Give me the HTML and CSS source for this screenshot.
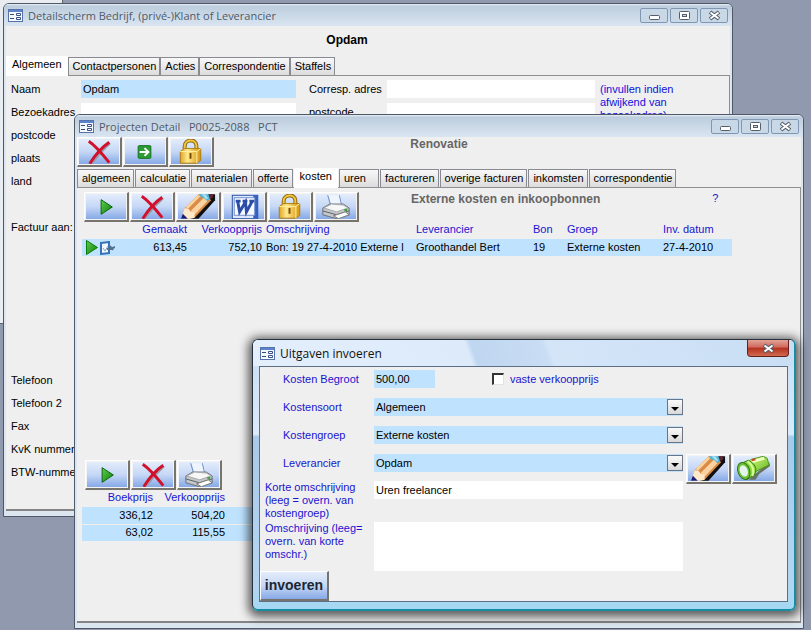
FILE: index.html
```
<!DOCTYPE html>
<html lang="nl">
<head>
  <meta charset="UTF-8">
  <meta name="viewport" content="width=device-width, initial-scale=1.0">
  <title>Projecten Detail</title>
  <link rel="stylesheet" href="styles.css">
</head>
<body>
  <!-- shared icons -->
  <svg class="defs" width="0" height="0" aria-hidden="true">
    <defs>
      <linearGradient id="gGreen" x1="0" y1="0" x2="1" y2="1">
        <stop offset="0" stop-color="#5fd04a"/><stop offset="1" stop-color="#0b7d0b"/>
      </linearGradient>
      <linearGradient id="gGold" x1="0" y1="0" x2="1" y2="0">
        <stop offset="0" stop-color="#e0a526"/><stop offset=".35" stop-color="#ffe98a"/><stop offset="1" stop-color="#d8940f"/>
      </linearGradient>
      <linearGradient id="gLime" x1="0" y1="0" x2="1" y2="1">
        <stop offset="0" stop-color="#d4ff80"/><stop offset="1" stop-color="#5fae1c"/>
      </linearGradient>
      <symbol id="form" viewBox="0 0 15 13">
        <rect x=".5" y=".5" width="14" height="12" fill="#f4f8ff" stroke="#5672a8"/>
        <rect x="1" y="1" width="13" height="2" fill="#5b83cf"/>
        <path d="M2 5.500h4M2 9.500h4" stroke="#3a4a70"/>
        <path d="M8.500 4.500h4v2h-4zM8.500 8.500h4v2h-4z" fill="#fff" stroke="#3a5288"/>
      </symbol>
      <symbol id="play" viewBox="0 0 41 25">
        <path d="M15.500 5.500L27 13 15.500 20.500z" fill="url(#gGreen)" stroke="#0a640a"/>
      </symbol>
      <symbol id="cross" viewBox="0 0 41 25">
        <path d="M13 25C18 18 24 11 32 4" stroke="#9a9aa8" stroke-width="2" fill="none"/>
        <path d="M10 2C16 6 24 15 31 24" stroke="#d2102c" stroke-width="3" fill="none"/>
        <path d="M11 25C16 17 22 9 31 3" stroke="#d2102c" stroke-width="3" fill="none"/>
      </symbol>
      <symbol id="go" viewBox="0 0 41 25">
        <rect x="13.500" y="6.500" width="13" height="13" rx="1" fill="#2c9a35" stroke="#14701d"/>
        <path d="M15 13h8M20 9l4 4-4 4" stroke="#fff" stroke-width="2" fill="none"/>
      </symbol>
      <symbol id="lock" viewBox="0 0 41 25">
        <path d="M14 12V7c0-7 11-8 12-1v6" fill="none" stroke="#8c6410" stroke-width="4"/>
        <path d="M14 12V7c0-7 11-8 12-1v6" fill="none" stroke="#f3c83e" stroke-width="2"/>
        <path d="M9.500 12.500l4-3h17v12l-4 3h-17z" fill="url(#gGold)" stroke="#b07c12"/>
        <path d="M9.500 12.500h17v12M26.500 12.500l4-3" fill="none" stroke="#fff0a0"/>
        <path d="M20 14v6" stroke="#7a4c06" stroke-width="2"/>
      </symbol>
      <symbol id="pencil" viewBox="0 0 41 25">
        <path d="M12 25h9L38 6V0h-6z" fill="#101010"/>
        <path d="M7 14L21 0h7l6 6-17 18-13 1z" fill="#d98c48"/>
        <path d="M8 13L20 1h4L10 15zM13 17L27 3l4 3-14 15z" fill="#fbd3a0"/>
        <path d="M7 14l4 1 2 3 4 1v5l-4 1H3z" fill="#ffe9c8"/>
        <path d="M5 20l5 5H3z" fill="#1b1b7c"/>
        <path d="M22 0h10l1 4-3 3-3-3-5-2z" fill="#4fb6dc"/>
        <path d="M24 0h4l3 4-2 1z" fill="#a6e2f4"/>
        <path d="M31 0h5v3l-3 2z" fill="#5c2632"/>
      </symbol>
      <symbol id="word" viewBox="0 0 41 25">
        <rect x="8.500" y="1" width="26" height="24" fill="#dce8fc" stroke="#2c4fa5"/>
        <rect x="30" y="1" width="5" height="24" fill="#3560bd"/>
        <rect x="10.500" y="3.500" width="21" height="18" fill="#f7faff" stroke="#7090cc"/>
        <path d="M12 7h5M19 7h5M26 7h5M14 7l2 11 6-10 1 10 6-11" stroke="#2b4da8" stroke-width="3" fill="none"/>
      </symbol>
      <symbol id="printer" viewBox="0 0 41 25">
        <path d="M13 1l3 12 11-2-2-10z" fill="#eef5ff"/>
        <path d="M12 1l3 10M24 1l2 9" stroke="#6488c8" fill="none"/>
        <path d="M7 14l7-4h14l6 4v7l-13 4-14-4z" fill="#c3c7ca" stroke="#6b7076"/>
        <path d="M8 14l8-4 12 1 5 3-12 4z" fill="#f7f7f7" stroke="#a5a9ad"/>
        <path d="M7 17l14 4 13-4" stroke="#5b5f64" fill="none"/>
        <path d="M18 22l12-4 4 3-11 4z" fill="#fff" stroke="#777"/>
        <path d="M29 16h3" stroke="#39a53a" stroke-width="2"/>
      </symbol>
      <symbol id="torch" viewBox="0 0 41 25">
        <path d="M15 24h7l4-6 11-8-1-4z" fill="#68745f"/>
        <path d="M13 7l5-4 12-3 4 2 2 7-13 6-3 5z" fill="url(#gLime)" stroke="#4c961b"/>
        <path d="M17 6l14-4" stroke="#efffc4" stroke-width="3"/>
        <path d="M8 7l7-3c7 4 9 9 6 15l-8 5z" fill="#8cda3e" stroke="#377a15"/>
        <path d="M14 5c5 4 7 9 5 15" stroke="#d9ff9c" stroke-width="2" fill="none"/>
        <ellipse cx="10" cy="15" rx="6" ry="9" transform="rotate(-20 10 15)" fill="#6cc234" stroke="#2e7514"/>
        <ellipse cx="10" cy="15" rx="4" ry="6" transform="rotate(-20 10 15)" fill="#e4f3ee"/>
        <path d="M18 4l4-1" stroke="#d04720" stroke-width="2"/>
      </symbol>
      <symbol id="rowplay" viewBox="0 0 12 15">
        <path d="M.5.5L11.500 7.500.5 14.500z" fill="url(#gGreen)" stroke="#0a7a0a"/>
      </symbol>
      <symbol id="rowedit" viewBox="0 0 15 14">
        <path d="M1 2l8-1v11l-8 1z" fill="#f3f8ff" stroke="#3673b8" stroke-width="2"/>
        <path d="M3 7l2 3 3-5" stroke="#8aa6bd" fill="none"/>
        <path d="M7 8h4l4-2M10 5l3 4" stroke="#56718b" stroke-width="2" fill="none"/>
      </symbol>
      <symbol id="min" viewBox="0 0 13 11">
        <rect x="1.500" y="5.500" width="10" height="4" rx="1" fill="#fff" stroke="#555d6a"/>
      </symbol>
      <symbol id="max" viewBox="0 0 13 11">
        <rect x="1.500" y="1.500" width="10" height="8" rx="1" fill="#fff" stroke="#555d6a"/>
        <rect x="4.500" y="4.500" width="4" height="2" fill="#ccd9e8" stroke="#555d6a"/>
      </symbol>
      <symbol id="close" viewBox="0 0 13 11">
        <path d="M2 2l9 7M11 2L2 9" stroke="#555d6a" stroke-width="4"/>
        <path d="M2.500 2.500l8 6M10.500 2.500l-8 6" stroke="#fff" stroke-width="2"/>
      </symbol>
    </defs>
  </svg>

  <main class="desktop">
    <div class="backwin"></div>

    <!-- relation window -->
    <section class="window win-relation">
      <header class="titlebar">
        <svg class="form-icon"><use href="#form"/></svg>
        <span class="title">Detailscherm Bedrijf, (privé-)Klant of Leverancier</span>
        <div class="controls">
          <button type="button" aria-label="Minimaliseren"><svg><use href="#min"/></svg></button>
          <button type="button" aria-label="Maximaliseren"><svg><use href="#max"/></svg></button>
          <button type="button" aria-label="Sluiten"><svg><use href="#close"/></svg></button>
        </div>
      </header>
      <div class="client">
        <h1 class="relation-name">Opdam</h1>
        <nav class="tabs">
          <button type="button" class="tab active">Algemeen</button>
          <button type="button" class="tab">Contactpersonen</button>
          <button type="button" class="tab">Acties</button>
          <button type="button" class="tab">Correspondentie</button>
          <button type="button" class="tab">Staffels</button>
        </nav>
        <div class="page relation-page">
          <div class="address">
            <label for="naam">Naam</label>
            <input id="naam" class="field blue" value="Opdam">
            <label for="bezoek">Bezoekadres</label>
            <input id="bezoek" class="field">
            <span>postcode</span><span></span>
            <span>plaats</span><span></span>
            <span>land</span><span></span>
          </div>
          <div class="address">
            <label for="corresp">Corresp. adres</label>
            <input id="corresp" class="field">
            <label for="cpost">postcode</label>
            <input id="cpost" class="field">
          </div>
          <p class="note">(invullen indien afwijkend van bezoekadres)</p>
          <div class="contact">
            <span class="invoice">Factuur aan:</span>
            <span>Telefoon</span>
            <span>Telefoon 2</span>
            <span>Fax</span>
            <span>KvK nummer</span>
            <span>BTW-nummer</span>
          </div>
        </div>
      </div>
    </section>

    <!-- project window -->
    <section class="window win-project">
      <header class="titlebar">
        <svg class="form-icon"><use href="#form"/></svg>
        <span class="title">Projecten Detail &nbsp; P0025-2088 &nbsp; PCT</span>
        <div class="controls">
          <button type="button" aria-label="Minimaliseren"><svg><use href="#min"/></svg></button>
          <button type="button" aria-label="Maximaliseren"><svg><use href="#max"/></svg></button>
          <button type="button" aria-label="Sluiten"><svg><use href="#close"/></svg></button>
        </div>
      </header>
      <div class="client">
        <div class="project-head">
          <div class="toolbar">
            <button type="button" class="tool" aria-label="Verwijderen"><svg><use href="#cross"/></svg></button>
            <button type="button" class="tool" aria-label="Ga naar"><svg><use href="#go"/></svg></button>
            <button type="button" class="tool" aria-label="Vergrendelen"><svg><use href="#lock"/></svg></button>
          </div>
          <h2 class="heading">Renovatie</h2>
        </div>
        <nav class="tabs spaced">
          <button type="button" class="tab">algemeen</button>
          <button type="button" class="tab">calculatie</button>
          <button type="button" class="tab">materialen</button>
          <button type="button" class="tab">offerte</button>
          <button type="button" class="tab active">kosten</button>
          <button type="button" class="tab wide">uren</button>
          <button type="button" class="tab">factureren</button>
          <button type="button" class="tab">overige facturen</button>
          <button type="button" class="tab">inkomsten</button>
          <button type="button" class="tab">correspondentie</button>
        </nav>
        <div class="page project-page">
          <div class="costs-head">
            <div class="toolbar">
              <button type="button" class="tool" aria-label="Openen"><svg><use href="#play"/></svg></button>
              <button type="button" class="tool" aria-label="Verwijderen"><svg><use href="#cross"/></svg></button>
              <button type="button" class="tool" aria-label="Bewerken"><svg><use href="#pencil"/></svg></button>
              <button type="button" class="tool" aria-label="Word"><svg><use href="#word"/></svg></button>
              <button type="button" class="tool" aria-label="Vergrendelen"><svg><use href="#lock"/></svg></button>
              <button type="button" class="tool" aria-label="Afdrukken"><svg><use href="#printer"/></svg></button>
            </div>
            <h2 class="heading">Externe kosten en inkoopbonnen</h2>
            <a class="help" href="#">?</a>
          </div>
          <table class="grid costs">
            <colgroup>
              <col class="c-icons"><col class="c-made"><col class="c-sale"><col class="c-desc">
              <col class="c-supplier"><col class="c-bon"><col class="c-group"><col class="c-date">
            </colgroup>
            <thead>
              <tr>
                <th></th>
                <th class="num">Gemaakt</th>
                <th class="num">Verkoopprijs</th>
                <th>Omschrijving</th>
                <th>Leverancier</th>
                <th>Bon</th>
                <th>Groep</th>
                <th>Inv. datum</th>
              </tr>
            </thead>
            <tbody>
              <tr>
                <td class="row-icons"><svg class="rowplay"><use href="#rowplay"/></svg><svg class="rowedit"><use href="#rowedit"/></svg></td>
                <td class="num">613,45</td>
                <td class="num">752,10</td>
                <td>Bon: 19 27-4-2010 Externe l</td>
                <td>Groothandel Bert</td>
                <td>19</td>
                <td>Externe kosten</td>
                <td>27-4-2010</td>
              </tr>
            </tbody>
          </table>
          <div class="totals">
            <div class="toolbar">
              <button type="button" class="tool" aria-label="Openen"><svg><use href="#play"/></svg></button>
              <button type="button" class="tool" aria-label="Verwijderen"><svg><use href="#cross"/></svg></button>
              <button type="button" class="tool" aria-label="Afdrukken"><svg><use href="#printer"/></svg></button>
            </div>
            <table class="grid sums">
              <colgroup><col class="c-book"><col class="c-sum"><col></colgroup>
              <thead>
                <tr><th class="num">Boekprijs</th><th class="num">Verkoopprijs</th><th></th></tr>
              </thead>
              <tbody>
                <tr><td class="num">336,12</td><td class="num">504,20</td><td></td></tr>
                <tr><td class="num">63,02</td><td class="num">115,55</td><td></td></tr>
              </tbody>
            </table>
          </div>
        </div>
      </div>
    </section>

    <!-- expense dialog -->
    <section class="dialog" role="dialog" aria-labelledby="dlgtitle">
      <header class="dialog-bar">
        <svg class="form-icon"><use href="#form"/></svg>
        <span class="title" id="dlgtitle">Uitgaven invoeren</span>
        <button type="button" class="dialog-close" aria-label="Sluiten"><svg><use href="#close"/></svg></button>
      </header>
      <form class="dialog-body">
        <div class="fields">
          <label for="begroot">Kosten Begroot</label>
          <div class="line">
            <input id="begroot" class="field blue short" value="500,00">
            <span class="check"><input type="checkbox" id="vast"><label for="vast">vaste verkoopprijs</label></span>
          </div>
          <label for="soort">Kostensoort</label>
          <div class="combo"><select id="soort" class="field blue"><option>Algemeen</option></select><span class="arrow"></span></div>
          <label for="groep">Kostengroep</label>
          <div class="combo"><select id="groep" class="field blue"><option>Externe kosten</option></select><span class="arrow"></span></div>
          <label for="lev">Leverancier</label>
          <div class="line">
            <div class="combo"><select id="lev" class="field blue"><option>Opdam</option></select><span class="arrow"></span></div>
            <div class="toolbar">
              <button type="button" class="tool" aria-label="Bewerken"><svg><use href="#pencil"/></svg></button>
              <button type="button" class="tool" aria-label="Zoeken"><svg><use href="#torch"/></svg></button>
            </div>
          </div>
        </div>
        <div class="fields texts">
          <label for="kort">Korte omschrijving (leeg = overn. van kostengroep)</label>
          <input id="kort" class="field" value="Uren freelancer">
          <label for="lang">Omschrijving (leeg= overn. van korte omschr.)</label>
          <textarea id="lang" class="field"></textarea>
        </div>
        <button type="button" class="submit">invoeren</button>
      </form>
    </section>
  </main>
</body>
</html>
```

FILE: styles.css
```
* {
  box-sizing: border-box;
}
body {
  margin: 0;
  font-family: "Liberation Sans", Arial, sans-serif;
  font-size: 11px;
  line-height: 13px;
  color: #000;
}
button, input, select, textarea {
  font: inherit;
  color: inherit;
  margin: 0;
}
h1, h2, p {
  margin: 0;
}
.defs {
  position: absolute;
}
.desktop {
  position: relative;
  height: 100vh;
  min-height: 630px;
  overflow: hidden;
  background: #9199ae;
}
.backwin {
  position: absolute;
  left: 0;
  top: 0;
  width: 63px;
  height: 324px;
  background: #e9edf2;
  border-right: 1px solid #5d6472;
  border-bottom: 1px solid #5d6472;
}

/* windows */
.window {
  position: absolute;
  display: flex;
  flex-direction: column;
  padding: 0 2px 5px;
  background: #dbe6f0;
  border: 1px solid #4f5866;
  border-radius: 6px 6px 0 0;
  overflow: hidden;
}
.win-relation {
  left: 3px;
  top: 3px;
  right: 78px;
  bottom: 113px;
}
.win-project {
  left: 74px;
  top: 114px;
  right: 7px;
  bottom: 1px;
}
.titlebar {
  display: flex;
  align-items: center;
  flex: none;
  height: 22px;
  margin: 0 -2px;
  padding: 0 4px;
  background: linear-gradient(#eaf1f8 0, #bdcddd 2px, #d9e5f1 100%);
}
.form-icon {
  width: 15px;
  height: 13px;
  margin-right: 5px;
}
.title {
  font-family: "Open Sans", "Noto Sans", sans-serif;
  font-size: 11px;
  color: #505a68;
}
.controls {
  display: flex;
  gap: 2px;
  margin-left: auto;
}
.controls button {
  display: flex;
  align-items: center;
  justify-content: center;
  width: 28px;
  height: 15px;
  padding: 0;
  background: #c9d8e7;
  border: 1px solid #8097b4;
  border-radius: 2px;
}
.controls svg, .dialog-close svg {
  width: 13px;
  height: 11px;
}
.client {
  flex: 1;
  display: flex;
  flex-direction: column;
  min-height: 0;
  background: #efefef;
  border-bottom: 2px solid #858585;
}

/* tabs */
.tabs {
  display: flex;
  align-items: flex-end;
  height: 19px;
}
.tabs.spaced {
  gap: 1px;
}
.tab {
  height: 18px;
  padding: 0 3px 0 4px;
  white-space: nowrap;
  background: linear-gradient(#f8f8f8, #dcdcdc);
  border: 1px solid #8a8a92;
  border-bottom: 0;
}
.tab.active {
  position: relative;
  height: 20px;
  margin-bottom: -1px;
  padding: 0 6px 3px;
  background: #fff;
  border: 0;
}
.tab.wide {
  padding-right: 12px;
}
.page {
  flex: 1;
  min-height: 0;
  border-top: 1px solid #8f8f8f;
  border-right: 1px solid #8f8f8f;
}

/* fields */
.field {
  display: block;
  width: 100%;
  height: 18px;
  padding: 0 2px;
  background: #fff;
  border: 0;
  border-radius: 0;
}
.blue {
  background: #bfe3ff;
}
.relation-name {
  height: 30px;
  padding: 6px 42px 0 0;
  font-size: 12px;
  line-height: 16px;
  text-align: center;
}
.relation-page {
  display: grid;
  grid-template-columns: 290px 286px 90px;
  grid-template-rows: 115px auto;
  column-gap: 8px;
  padding: 4px 0 0 5px;
  overflow: hidden;
}
.address {
  display: grid;
  grid-template-columns: 70px 1fr;
  grid-auto-rows: 18px;
  row-gap: 5px;
  align-items: center;
  align-content: start;
  padding-right: 5px;
}
.address + .address {
  grid-template-columns: 78px 1fr;
  padding-right: 0;
}
.note {
  margin-left: -3px;
  padding-top: 3px;
  color: #1010dc;
}
.contact {
  grid-column: 1;
  display: flex;
  flex-direction: column;
  gap: 10px;
  padding-top: 26px;
}
.invoice {
  margin-bottom: 130px;
}

/* tool buttons */
.toolbar {
  display: flex;
  gap: 1px;
  flex: none;
}
.tool {
  width: 45px;
  height: 30px;
  padding: 1px;
  background: #f3f3f3;
  border: 1px solid #fff;
  border-right: 2px solid #77736d;
  border-bottom: 2px solid #77736d;
}
.tool svg {
  display: block;
  width: 40px;
  height: 25px;
  background: linear-gradient(#e3ecfb, #c6d8f6 50%, #86a9e6);
}
.project-head {
  display: grid;
  grid-template-columns: 138px 1fr 138px;
  height: 31px;
}
.heading {
  font-size: 12px;
  line-height: 14px;
  color: #666;
  text-align: center;
}
.project-page {
  display: flex;
  flex-direction: column;
  padding: 4px 0 0 5px;
}
.costs-head {
  display: flex;
  align-items: flex-start;
  padding-left: 2px;
}
.costs-head .heading {
  margin-left: 52px;
}
.help {
  margin-left: 112px;
  color: #1a14d0;
  text-decoration: none;
}
.grid {
  table-layout: fixed;
  border-collapse: collapse;
}
.grid th {
  height: 17px;
  padding: 0 2px 2px;
  font-weight: normal;
  text-align: left;
  color: #1a14d0;
}
.grid td {
  height: 17px;
  padding: 0 2px;
  background: #bfe3ff;
  white-space: nowrap;
}
.grid .num {
  text-align: right;
}
.costs { width: 650px; }
.c-icons { width: 40px; }
.c-made { width: 67px; }
.c-sale { width: 75px; }
.c-desc { width: 150px; }
.c-supplier { width: 117px; }
.c-bon { width: 34px; }
.c-group { width: 96px; }
.c-date { width: 71px; }
.grid .row-icons {
  padding: 0 4px;
}
.row-icons svg {
  display: inline-block;
  vertical-align: middle;
}
.rowplay {
  width: 12px;
  height: 15px;
  margin-right: 2px;
}
.rowedit {
  width: 15px;
  height: 14px;
}
.totals {
  margin-top: auto;
  padding-bottom: 80px;
}
.totals .toolbar {
  padding-left: 3px;
}
.sums {
  width: 300px;
}
.sums tr + tr td {
  border-top: 1px solid #efefef;
}
.c-book { width: 73px; }
.c-sum { width: 72px; }

/* dialog */
.dialog {
  position: absolute;
  left: 252px;
  top: 339px;
  right: 15px;
  bottom: 19px;
  display: flex;
  flex-direction: column;
  padding: 0 6px 7px;
  border: 1px solid #26313c;
  border-right: 2px solid #168da0;
  border-bottom: 2px solid #168da0;
  border-radius: 6px;
  background: linear-gradient(#c7dcf3 0, #dceafa 35%, #a9c9ea 36%, #b4d5f2 90%, #a4d8f2 100%);
  box-shadow: 0 2px 10px 4px rgba(0, 0, 0, 0.6);
}
.dialog-bar {
  display: flex;
  align-items: center;
  height: 26px;
  margin: 0 -6px;
  padding: 0 5px 0 7px;
  border-radius: 5px 5px 0 0;
  background: linear-gradient(70deg, #e4effc 0, #dceafa 40%, #bfd6f0 41%, #c9ddf4 54%, #d4e5f8 55%, #c9def4 100%);
}
.dialog-bar .title {
  font-size: 12px;
  color: #111;
}
.dialog-close {
  align-self: flex-start;
  display: flex;
  align-items: center;
  justify-content: center;
  width: 42px;
  height: 17px;
  margin-left: auto;
  padding: 0;
  border: 1px solid #64211c;
  border-top: 0;
  border-radius: 0 0 4px 4px;
  background: linear-gradient(#e3a297 0, #cf6a5c 45%, #b3301f 50%, #d26a50 100%);
}
.dialog-body {
  flex: 1;
  display: flex;
  flex-direction: column;
  align-items: stretch;
  padding-top: 3px;
  background: #efefef;
  border: 1px solid #5c6f86;
}
.fields {
  display: grid;
  grid-template-columns: 91px 1fr;
  grid-auto-rows: 18px;
  row-gap: 10px;
  align-items: center;
  padding-left: 23px;
}
.fields > label {
  color: #1a14d0;
}
.line {
  display: flex;
  align-items: flex-start;
  height: 18px;
}
.line .toolbar {
  padding-left: 3px;
}
.short {
  width: 61px;
}
.check {
  display: flex;
  align-items: center;
  gap: 6px;
  margin-left: 57px;
  height: 18px;
  color: #1a14d0;
}
.check input {
  appearance: none;
  width: 12px;
  height: 12px;
  background: #fff;
  border: 1px solid #e3e3e3;
  border-top: 2px solid #333;
  border-left: 2px solid #333;
}
.combo {
  position: relative;
  width: 309px;
}
.combo select {
  appearance: none;
}
.arrow {
  position: absolute;
  right: 0;
  top: 1px;
  width: 16px;
  height: 16px;
  background: linear-gradient(#fafafa, #d9d9d9);
  border: 1px solid #6b7480;
  pointer-events: none;
}
.arrow::after {
  content: "";
  position: absolute;
  left: 3px;
  top: 7px;
  border: 4px solid transparent;
  border-top-color: #000;
  border-bottom: 0;
}
.texts {
  grid-template-columns: 109px 309px;
  grid-auto-rows: auto;
  row-gap: 2px;
  align-items: start;
  padding: 9px 0 0 5px;
}
.texts textarea {
  height: 49px;
  resize: none;
}
.submit {
  width: 69px;
  height: 30px;
  margin-top: auto;
  padding: 0;
  font-size: 14px;
  font-weight: bold;
  color: #1c2630;
  background: linear-gradient(#e3ecfb, #c6d8f6 50%, #86a9e6);
  border: 1px solid #fff;
  border-right: 2px solid #77736d;
  border-bottom: 2px solid #77736d;
}
```
